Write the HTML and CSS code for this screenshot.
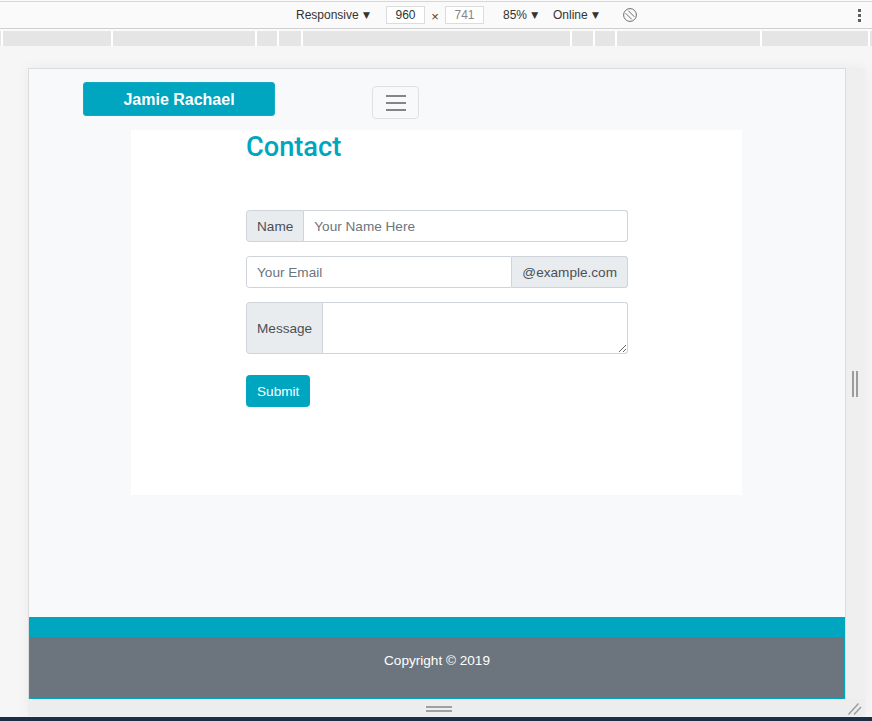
FILE: index.html
```html
<!DOCTYPE html>
<html lang="en">
<head>
    <meta charset="UTF-8">
    <meta name="viewport" content="width=device-width, initial-scale=1.0">
    <title>Contact - Jamie Rachael</title>
    <link rel="stylesheet" href="styles.css">
</head>
<body>
    <div class="devtools">
        <div class="toolbar">
            <span class="tb-item tb-device">Responsive <span class="caret">&#9660;</span></span>
            <span class="dim-box">960</span>
            <span class="times">&times;</span>
            <span class="dim-box dim-muted">741</span>
            <span class="tb-item tb-zoom">85% <span class="caret">&#9660;</span></span>
            <span class="tb-item tb-network">Online <span class="caret">&#9660;</span></span>
            <svg class="rotate-icon" width="16" height="16" viewBox="0 0 16 16">
                <circle cx="8" cy="8" r="6.4" fill="none" stroke="#6e6e6e" stroke-width="1"/>
                <line x1="3.6" y1="6.2" x2="9.8" y2="12.4" stroke="#6e6e6e" stroke-width="1"/>
                <line x1="6.2" y1="3.6" x2="12.4" y2="9.8" stroke="#6e6e6e" stroke-width="1"/>
            </svg>
            <span class="kebab"><i></i><i></i><i></i></span>
        </div>
        <div class="media-bar">
            <span style="width: 1px"></span>
            <span style="width: 108px"></span>
            <span style="width: 142px"></span>
            <span style="width: 20px"></span>
            <span style="width: 22px"></span>
            <span style="width: 267px"></span>
            <span style="width: 21px"></span>
            <span style="width: 20px"></span>
            <span style="width: 143px"></span>
            <span style="width: 106px"></span>
            <span style="width: 2px"></span>
        </div>
    </div>

    <div class="stage">
        <div class="device-grid">
            <div class="device">
                <div class="page">
                    <nav class="navbar">
                        <a class="brand" href="#">Jamie Rachael</a>
                        <button class="toggler" type="button" aria-label="Toggle navigation">
                            <span></span><span></span><span></span>
                        </button>
                    </nav>

                    <div class="content-box">
                        <h2 class="page-title">Contact</h2>
                        <form class="contact-form">
                            <div class="input-group">
                                <span class="addon addon-left">Name</span>
                                <input class="field field-right" type="text" placeholder="Your Name Here">
                            </div>
                            <div class="input-group">
                                <input class="field field-left" type="text" placeholder="Your Email">
                                <span class="addon addon-right">@example.com</span>
                            </div>
                            <div class="input-group input-group-tall">
                                <span class="addon addon-left">Message</span>
                                <textarea class="field field-right"></textarea>
                            </div>
                            <button class="submit-btn" type="submit">Submit</button>
                        </form>
                    </div>

                    <footer class="site-footer">
                        <div class="footer-strip"></div>
                        <div class="footer-body">Copyright &copy; 2019</div>
                    </footer>
                </div>
            </div>
            <div class="handle-right"><span></span><span></span></div>
            <div class="handle-bottom"><span></span><span></span></div>
            <div class="handle-corner">
                <svg width="19" height="17" viewBox="0 0 19 17">
                    <line x1="2.5" y1="15.5" x2="12.5" y2="4.5" stroke="#9a9a9a" stroke-width="1.4"/>
                    <line x1="8" y1="15.5" x2="15" y2="8" stroke="#9a9a9a" stroke-width="1.4"/>
                </svg>
            </div>
        </div>
    </div>

    <div class="taskbar"></div>
</body>
</html>
```

FILE: styles.css
```css
body {
    margin: 0;
    width: 872px;
    height: 721px;
    overflow: hidden;
    display: flex;
    flex-direction: column;
    background: #f6f6f6;
    font-family: "Liberation Sans", Arial, sans-serif;
}

/* devtools toolbar */
.devtools {
    background: #fafafa;
    padding-top: 1px;
}
.toolbar {
    height: 26px;
    border-top: 1px solid #d6d6d6;
    border-bottom: 1px solid #cfcfcf;
    display: flex;
    align-items: center;
    padding-left: 296px;
    font-size: 12px;
    color: #333;
}
.tb-item {
    white-space: nowrap;
}
.caret {
    font-family: "DejaVu Sans", sans-serif;
    font-size: 9px;
    margin-left: 1px;
    position: relative;
    top: -1px;
}
.tb-device {
    width: 74px;
}
.dim-box {
    box-sizing: border-box;
    width: 39px;
    height: 18px;
    margin-left: 16px;
    border: 1px solid #dcdcdc;
    background: #fff;
    display: flex;
    align-items: center;
    justify-content: center;
    color: #333;
}
.dim-muted {
    margin-left: 0;
    color: #858585;
}
.times {
    width: 20px;
    text-align: center;
    font-size: 13px;
    color: #444;
    position: relative;
    top: 1px;
}
.tb-zoom {
    margin-left: 19px;
    width: 38px;
}
.tb-network {
    margin-left: 12px;
    width: 46px;
}
.rotate-icon {
    margin-left: 23px;
}
.kebab {
    margin-left: auto;
    margin-right: 11px;
    display: flex;
    flex-direction: column;
    gap: 2px;
}
.kebab i {
    width: 3px;
    height: 3px;
    background: #5f5f5f;
}
.media-bar {
    display: flex;
    gap: 2px;
    height: 15px;
    margin-top: 2px;
    background: #fff;
}
.media-bar span {
    background: #e5e5e5;
}

/* emulated device */
.stage {
    flex: 1;
    padding: 22px 0 0 28px;
}
.device-grid {
    display: grid;
    grid-template-columns: 818px 19px;
    grid-template-rows: 631px 17px;
    box-shadow: 0 0 14px rgba(0, 0, 0, 0.05);
    width: 837px;
}
.device {
    border: 1px solid #dcdcdc;
    border-bottom: 0;
}
.handle-right {
    background: #efefef;
    display: flex;
    align-items: center;
    padding-left: 6px;
    gap: 2px;
}
.handle-right span {
    width: 2px;
    height: 26px;
    background: #9d9d9d;
}
.handle-bottom {
    background: #ededed;
    display: flex;
    flex-direction: column;
    align-items: center;
    justify-content: center;
    gap: 2px;
    padding-left: 3px;
    padding-top: 3px;
}
.handle-bottom span {
    width: 26px;
    height: 2px;
    background: #a0a0a0;
}
.handle-corner {
    background: #ededed;
}
.handle-corner svg {
    display: block;
}
.taskbar {
    height: 4px;
    background: #1f2c45;
}

/* the page itself */
.page {
    width: 816px;
    height: 630px;
    background: #f8f9fa;
    display: flex;
    flex-direction: column;
    font-size: 13.6px;
    color: #212529;
}
.navbar {
    height: 61px;
    box-sizing: border-box;
    padding: 13px 0 0 54px;
    display: flex;
    align-items: flex-start;
    gap: 97px;
}
.brand {
    box-sizing: border-box;
    width: 192px;
    height: 34px;
    background: #00a5bf;
    border: 1px solid #13abc3;
    border-radius: 3px;
    color: #fff;
    font-weight: bold;
    font-size: 16px;
    text-decoration: none;
    display: flex;
    align-items: center;
    justify-content: center;
    padding-top: 1px;
}
.toggler {
    box-sizing: border-box;
    width: 47px;
    height: 33px;
    margin-top: 4px;
    padding: 0;
    background: transparent;
    border: 1px solid #dfe1e3;
    border-radius: 4px;
    display: flex;
    flex-direction: column;
    align-items: center;
    justify-content: center;
    gap: 5px;
}
.toggler span {
    width: 20px;
    height: 2px;
    background: #858585;
}
.content-box {
    margin-left: 102px;
    width: 611px;
    height: 365px;
    box-sizing: border-box;
    padding: 1px 0 0 115px;
    background: #fff;
}
.page-title {
    margin: 0;
    font-family: Roboto, "Liberation Sans", sans-serif;
    font-weight: 500;
    font-size: 27.2px;
    line-height: 33px;
    color: #00a5bf;
}
.contact-form {
    width: 382px;
    margin-top: 46px;
}
.input-group {
    display: flex;
    height: 32px;
    margin-bottom: 14px;
}
.input-group-tall {
    height: 52px;
    margin-bottom: 21px;
}
.addon {
    box-sizing: border-box;
    display: flex;
    align-items: center;
    padding: 0 10px;
    background: #e9ecef;
    border: 1px solid #ced4da;
    color: #495057;
    white-space: nowrap;
}
.addon-left {
    border-radius: 3.4px 0 0 3.4px;
}
.addon-right {
    border-left: 0;
    border-radius: 0 3.4px 3.4px 0;
}
.field {
    flex: 1;
    min-width: 0;
    box-sizing: border-box;
    margin: 0;
    padding: 0 10px;
    border: 1px solid #ced4da;
    background: #fff;
    font-family: inherit;
    font-size: 13.6px;
    color: #495057;
}
.field::placeholder {
    color: #6c757d;
}
.field-right {
    border-left: 0;
    border-radius: 0 3.4px 3.4px 0;
}
.field-left {
    border-radius: 3.4px 0 0 3.4px;
}
textarea.field {
    height: 52px;
    padding: 6px 10px;
}
.submit-btn {
    box-sizing: border-box;
    height: 32px;
    padding: 0 10px;
    background: #00a5bf;
    border: 1px solid #00a5bf;
    border-radius: 3.4px;
    color: #fff;
    font-family: inherit;
    font-size: 13.6px;
}
.site-footer {
    margin-top: auto;
}
.footer-strip {
    height: 20px;
    background: #00a5bf;
}
.footer-body {
    box-sizing: border-box;
    height: 62px;
    padding-top: 14px;
    background: #6c757d;
    border: 1px solid #00a5bf;
    border-top: 0;
    color: #fff;
    text-align: center;
    line-height: 20px;
}
```
